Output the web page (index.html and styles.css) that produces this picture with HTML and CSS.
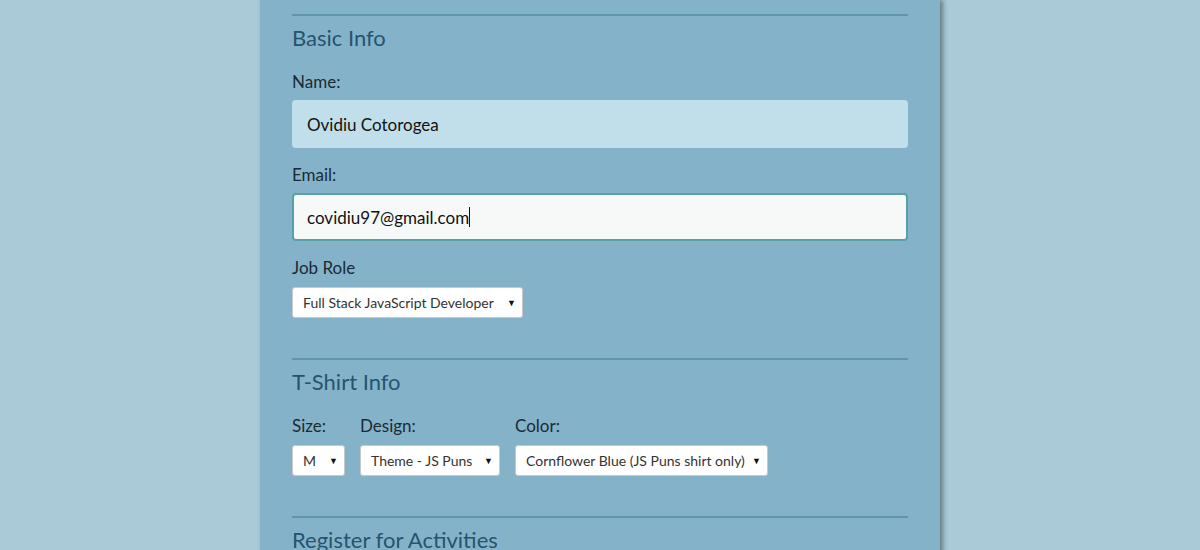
FILE: index.html
```html
<!DOCTYPE html>
<html lang="en">
<head>
<meta charset="utf-8">
<title>Registration Form</title>
<link rel="stylesheet" href="styles.css">
</head>
<body>
<div class="container">
  <form class="form">
    <fieldset class="section">
      <h2 class="legend">Basic Info</h2>
      <label class="label" for="name">Name:</label>
      <input class="text-input name-input" id="name" type="text" value="Ovidiu Cotorogea">
      <label class="label" for="mail">Email:</label>
      <div class="focus-wrap">
        <input class="text-input email-input" id="mail" type="email" value="covidiu97@gmail.com">
        <span class="caret"></span>
      </div>
      <label class="label select-label" for="title">Job Role</label>
      <div class="select-wrap role-select">
        <select class="select" id="title">
          <option>Full Stack JavaScript Developer</option>
        </select>
      </div>
    </fieldset>

    <fieldset class="section">
      <h2 class="legend">T-Shirt Info</h2>
      <div class="shirt-row">
        <div class="field size-field">
          <label class="label select-label" for="size">Size:</label>
          <div class="select-wrap">
            <select class="select" id="size"><option>M</option></select>
          </div>
        </div>
        <div class="field design-field">
          <label class="label select-label" for="design">Design:</label>
          <div class="select-wrap">
            <select class="select" id="design"><option>Theme - JS Puns</option></select>
          </div>
        </div>
        <div class="field color-field">
          <label class="label select-label" for="color">Color:</label>
          <div class="select-wrap">
            <select class="select" id="color"><option>Cornflower Blue (JS Puns shirt only)</option></select>
          </div>
        </div>
      </div>
    </fieldset>

    <fieldset class="section">
      <h2 class="legend">Register for Activities</h2>
    </fieldset>
  </form>
</div>
</body>
</html>
```

FILE: styles.css
```css
* { box-sizing: border-box; }

html, body {
  margin: 0;
  height: 100%;
}

body {
  background: #aacad7;
  font-family: "Lato", "Open Sans", sans-serif;
  color: #1e2a32;
  overflow: hidden;
}

.container {
  width: 680px;
  min-height: 100%;
  margin: 0 auto;
  background: #84b3c9;
  box-shadow: 3px 0 5px rgba(0, 0, 0, 0.4);
  padding: 14px 32px 0;
}

.form { margin: 0; }

.section {
  border: 0;
  border-top: 2px solid #5f96ad;
  margin: 0 0 40px;
  padding: 0;
  min-width: 0;
}

.legend {
  margin: 9px 0 21px;
  font-size: 22px;
  line-height: 26px;
  font-weight: 400;
  color: #265470;
}

.label {
  display: block;
  font-size: 17px;
  line-height: 20px;
  margin-bottom: 8px;
  color: #1b2a33;
}

.select-label {
  margin-bottom: 9px;
}

.text-input {
  display: block;
  width: 100%;
  height: 48px;
  border-radius: 4px;
  font-family: inherit;
  font-size: 17px;
  color: #111;
  outline: none;
  margin: 0 0 17px;
}

.name-input {
  background: #c1dfea;
  border: 2px solid #c1dfea;
  padding: 0 13px;
}

.focus-wrap {
  position: relative;
}

.email-input {
  background: #f6f9f7;
  border: 2px solid #5a9ea6;
  padding: 0 13px;
}

.caret {
  position: absolute;
  top: 14px;
  left: 177px;
  width: 1px;
  height: 20px;
  background: #111;
}

.select-wrap {
  position: relative;
  display: block;
}

.select-wrap::after {
  content: "\25BC";
  position: absolute;
  right: 7px;
  top: 10px;
  font-size: 9px;
  line-height: 12px;
  color: #111;
  pointer-events: none;
}

.select {
  -webkit-appearance: none;
  appearance: none;
  display: block;
  height: 31px;
  width: 100%;
  background: #fff;
  border: 1px solid #c9c9c9;
  border-radius: 3px;
  padding: 0 20px 0 10px;
  font-family: inherit;
  font-size: 14px;
  color: #333;
  outline: none;
}

.role-select { width: 231px; }

.shirt-row {
  display: flex;
  gap: 15px;
}

.size-field { width: 53px; }
.design-field { width: 140px; }
.color-field { width: 253px; }
```
